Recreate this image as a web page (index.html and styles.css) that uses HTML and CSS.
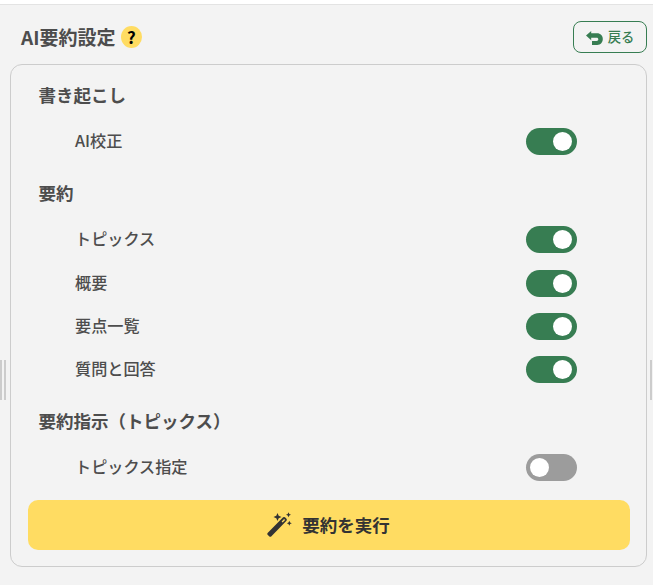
FILE: index.html
```html
<!DOCTYPE html>
<html lang="ja">
<head>
<meta charset="utf-8">
<title>AI要約設定</title>
<link rel="stylesheet" href="styles.css">
</head>
<body>
<main class="panel">
  <header class="header">
    <h1 class="title">AI要約設定</h1>
    <button class="help">?</button>
    <button class="back">
      <svg class="back-icon" viewBox="0 0 17 14"><path d="M5.200 0v2.300h5.800C14.600 2.300 16.800 4.700 16.800 8.100S14.600 14 11.200 14H6V9.900h4.600c1.100 0 1.700-.6 1.700-1.600S11.700 6.700 10.600 6.700H5.200v2.500L0 4.600z"/></svg>
      <span>戻る</span>
    </button>
  </header>
  <section class="card">
    <h2 class="group">書き起こし</h2>
    <div class="row"><span>AI校正</span><i class="switch on"></i></div>
    <h2 class="group">要約</h2>
    <div class="row"><span>トピックス</span><i class="switch on"></i></div>
    <div class="row"><span>概要</span><i class="switch on"></i></div>
    <div class="row"><span>要点一覧</span><i class="switch on"></i></div>
    <div class="row"><span>質問と回答</span><i class="switch on"></i></div>
    <h2 class="group">要約指示（トピックス）</h2>
    <div class="row"><span>トピックス指定</span><i class="switch"></i></div>
    <button class="run">
      <svg class="wand" viewBox="0 0 25 25">
        <path fill-rule="evenodd" d="M16.100 4.300q1-.8 1.900 0l1.500 1.500q.8.900 0 1.900L4.200 23.400q-.9.800-1.800 0L.6 21.700q-.8-.9 0-1.800zM17.100 6.100l-2.500 2.500 1 1 2.500-2.500z"/>
        <path d="M10.500 0l1.200 2.800 2.800 1.200-2.800 1.200-1.200 2.800-1.200-2.800L6.500 4l2.800-1.200zM21.500-.7l.8 1.700 1.700.8-1.700.8-.8 1.700-.8-1.700-1.700-.8 1.700-.8zM22.300 7.700l.8 1.700 1.700.8-1.700.8-.8 1.700-.8-1.700-1.700-.8 1.700-.8z"/>
      </svg>
      <span>要約を実行</span>
    </button>
  </section>
</main>
<div class="grip grip-left"></div>
<div class="grip grip-right"></div>
</body>
</html>
```
FILE: styles.css
```css
* { box-sizing: border-box; }
body {
  margin: 0;
  height: 585px;
  overflow: hidden;
  position: relative;
  padding-top: 4px;
  background: #fff;
  color: #4d4d4d;
  font-family: "Noto Sans CJK JP", sans-serif;
}
h1, h2 { margin: 0; }
button { font-family: inherit; padding: 0; border: 0; }
.panel {
  height: 581px;
  border-top: 1px solid #e3e3e3;
  background: #f3f3f3;
  padding: 0 6px 0 10px;
}
.header {
  display: flex;
  align-items: center;
  height: 59px;
  padding: 5px 0 0 11px;
}
.title { font-size: 19px; line-height: 28px; font-weight: 700; }
.help {
  width: 21px;
  height: 22px;
  margin-left: 6px;
  padding-right: 1px;
  border-radius: 50%;
  background: #ffdc62;
  color: #000;
  font-size: 17px;
  line-height: 20px;
  font-weight: 700;
}
.back {
  display: flex;
  align-items: center;
  justify-content: center;
  gap: 5px;
  width: 74px;
  height: 32px;
  margin-left: auto;
  border: 1px solid #377d52;
  border-radius: 8px;
  background: transparent;
  color: #377d52;
  font-size: 13.300px;
  font-weight: 500;
}
.back span { padding-bottom: 2px; }
.back-icon { width: 17px; height: 14px; margin-top: 1px; fill: currentColor; }
.card {
  height: 503px;
  border: 1px solid #ccc;
  border-radius: 12px;
  padding: 0.500px 16px 0 17px;
}
.group {
  height: 54.67px;
  padding: 16.800px 0 0 10.500px;
  font-size: 17.500px;
  line-height: 26px;
  font-weight: 700;
}
.row {
  display: flex;
  align-items: center;
  justify-content: space-between;
  height: 43.33px;
  padding: 0 53px 0 47px;
  font-size: 16.150px;
  line-height: 24px;
  font-weight: 500;
}
.row span { padding-bottom: 3.200px; }
.switch {
  width: 51px;
  height: 27px;
  padding: 4px;
  border-radius: 14px;
  background: #9c9c9c;
}
.switch::after {
  content: "";
  display: block;
  width: 19px;
  height: 19px;
  border-radius: 50%;
  background: #fff;
}
.switch.on { background: #377d52; }
.switch.on::after { margin-left: 23px; }
.run {
  display: flex;
  align-items: center;
  justify-content: center;
  gap: 10px;
  width: 100%;
  height: 50px;
  margin-top: 10.500px;
  padding-right: 1px;
  border-radius: 10px;
  background: #ffdc62;
  color: #333;
  font-size: 17.500px;
  font-weight: 700;
}
.wand { width: 25px; height: 25px; margin-top: 1px; fill: currentColor; overflow: visible; }
.grip {
  position: absolute;
  top: 360px;
  height: 40px;
  background: #ccc;
}
.grip-left {
  left: 0;
  width: 6px;
  background: linear-gradient(90deg, #ccc 2px, #f3f3f3 2px 4px, #ccc 4px);
}
.grip-right { left: 650px; width: 2px; }
```
